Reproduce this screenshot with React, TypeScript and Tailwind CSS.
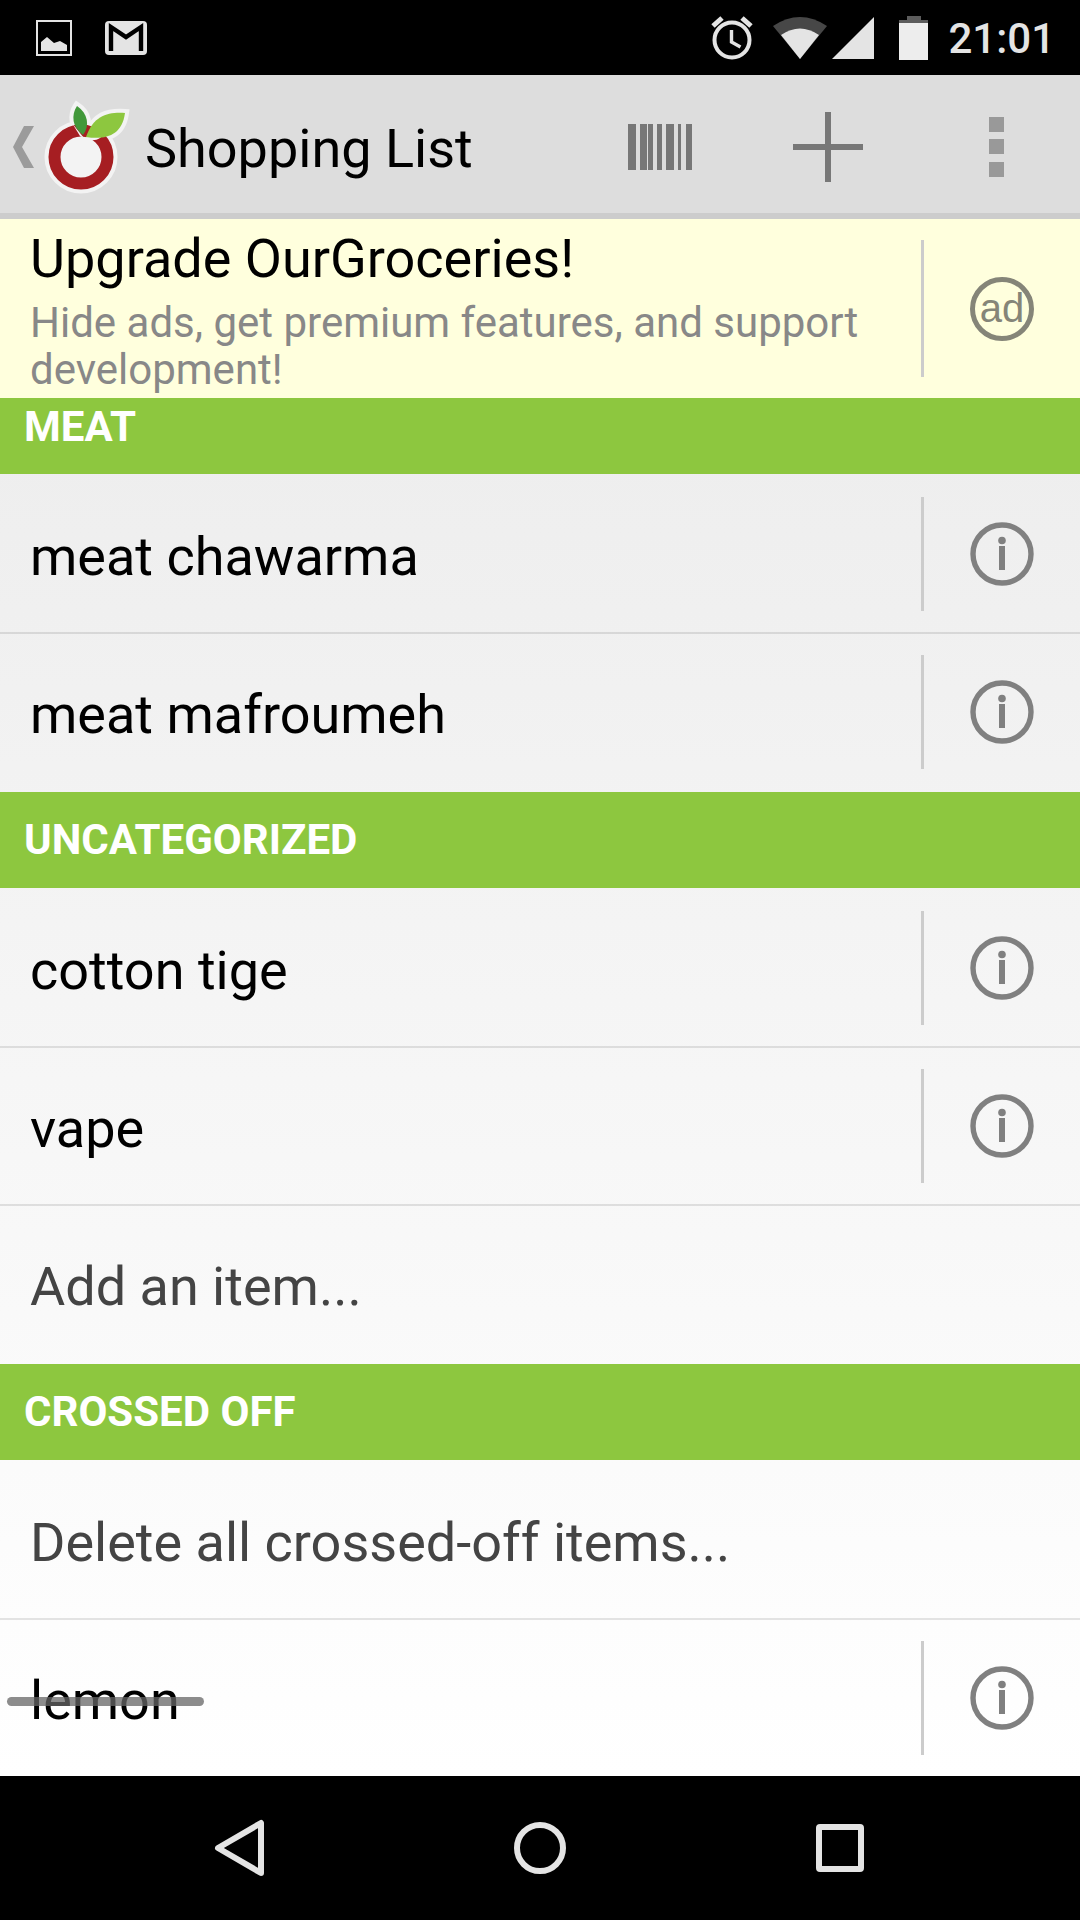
import React from "react";

type Row = { name: string; info?: boolean; muted?: boolean; crossed?: boolean };
type Section = { title: string; clipped?: boolean; rows: Row[] };

const sections: Section[] = [
  { title: "MEAT", clipped: true, rows: [{ name: "meat chawarma", info: true }, { name: "meat mafroumeh", info: true }] },
  {
    title: "UNCATEGORIZED",
    rows: [{ name: "cotton tige", info: true }, { name: "vape", info: true }, { name: "Add an item...", muted: true }],
  },
  {
    title: "CROSSED OFF",
    rows: [{ name: "Delete all crossed-off items...", muted: true }, { name: "lemon", info: true, crossed: true }],
  },
];

const StatusBar = () => {
  return (
    <div className="h-[75px] shrink-0 bg-black flex items-center justify-between pl-9 pr-[25px]">
      <div className="flex items-center gap-[33px]">
        <svg width="36" height="36" viewBox="0 0 36 36">
          <rect x="1" y="1" width="34" height="34" fill="none" stroke="#e4e4e4" strokeWidth="2" />
          <path d="M5 31V22L11 17L18 23L24 21L31 25V31Z" fill="#e4e4e4" />
        </svg>
        <svg width="42" height="34" viewBox="0 0 42 34">
          <rect width="42" height="34" rx="4" fill="#e4e4e4" />
          <path d="M6 30V6L21 16L36 6V30" fill="none" stroke="#000" strokeWidth="4.4" />
        </svg>
      </div>
      <div className="flex items-center">
        <svg width="42" height="44" viewBox="0 0 42 44" className="mr-5">
          <circle cx="21" cy="24" r="17.5" fill="none" stroke="#e4e4e4" strokeWidth="4" />
          <path d="M20.5 14V26L29.5 31" fill="none" stroke="#e4e4e4" strokeWidth="3.4" />
          <path d="M2 10L11 2M40 10L31 2" fill="none" stroke="#e4e4e4" strokeWidth="5" />
        </svg>
        <svg width="54" height="44" viewBox="0 0 54 44" className="mr-[5px]">
          <path d="M0 10Q27 -8 54 10L27 43Z" fill="#474747" />
          <path d="M8 19Q27 6 46 19L27 43Z" fill="#e4e4e4" />
        </svg>
        <svg width="42" height="44" viewBox="0 0 42 44" className="mr-[25px]">
          <path d="M0 43L42 1V43Z" fill="#e4e4e4" />
        </svg>
        <svg width="29" height="44" viewBox="0 0 29 44" className="mr-5">
          <path d="M0 7V4H8V0H22V4H29V7Z" fill="#5c5c5c" />
          <path d="M0 7H29V44H0Z" fill="#ededed" />
        </svg>
        <span className="pt-0.5 text-[42px] leading-[50px] font-medium text-[#e4e4e4]">21:01</span>
      </div>
    </div>
  );
};

const Logo = () => {
  return (
    <svg width="86" height="96" viewBox="0 0 86 96">
      <g stroke="#f3f3f3" strokeWidth="8" fill="#f3f3f3">
        <circle cx="37" cy="58" r="32.5" />
        <path d="M33 7C27 16 28 28 39 36C46 27 44 14 33 7Z" />
        <path d="M42 38C50 16 64 13 81 14C78 37 61 41 42 38Z" />
      </g>
      <circle cx="37" cy="58" r="26.5" fill="#f3f3f3" stroke="#a61e22" strokeWidth="12" />
      <path d="M28 24L40 39L66 30L56 39C50 43 43 41 36 37Z" fill="#f3f3f3" />
      <path d="M33 7C27 16 28 28 39 36C46 27 44 14 33 7Z" fill="#41983a" />
      <path d="M42 38C50 16 64 13 81 14C78 37 61 41 42 38Z" fill="#8dc73f" />
    </svg>
  );
};

const Header = () => {
  return (
    <header className="h-36 shrink-0 bg-[#ddd] border-b-6 border-[#ccc] flex items-center pt-1.5 pl-[13px] pr-[76px]">
      <button aria-label="Back to lists" className="flex items-center gap-2.5">
        <svg width="21" height="42" viewBox="0 0 21 42">
          <path d="M11 0H21L9 21L21 42H11L0 21Z" fill="#9b9b9b" />
        </svg>
        <Logo />
      </button>
      <h1 className="flex-1 pl-[15px] pt-1 text-[54px] leading-[64px] text-black">Shopping List</h1>
      <button aria-label="Scan barcode" className="mr-[101px]">
        <svg width="64" height="46" viewBox="0 0 64 46" fill="#777">
          <path d="M0 0H8V46H0ZM12 0H19V46H12ZM20 0H25V46H20ZM29 0H34V46H29ZM38 0H46V46H38ZM50 0H53V46H50ZM58 0H64V46H58Z" />
        </svg>
      </button>
      <button aria-label="Add item" className="mr-[126px]">
        <svg width="70" height="70" viewBox="0 0 70 70" fill="#777">
          <path d="M32 0H38V32H70V38H38V70H32V38H0V32H32Z" />
        </svg>
      </button>
      <button aria-label="More options">
        <svg width="15" height="60" viewBox="0 0 15 60" fill="#999">
          <path d="M0 0H15V15H0ZM0 22H15V37H0ZM0 45H15V60H0Z" />
        </svg>
      </button>
    </header>
  );
};

const InfoIcon = () => {
  return (
    <svg width="64" height="64" viewBox="0 0 64 64">
      <circle cx="32" cy="32" r="29" fill="none" stroke="#808080" strokeWidth="5.4" />
      <circle cx="32" cy="18.5" r="3.8" fill="#808080" />
      <rect x="29" y="24" width="6" height="24" fill="#808080" />
    </svg>
  );
};

const AdBanner = () => {
  return (
    <div className="h-[179px] bg-[#ffffdd] flex items-center">
      <div className="flex-1 pt-0.5 pl-[30px] pr-10">
        <h2 className="text-[54px] leading-[64px] text-black">Upgrade OurGroceries!</h2>
        <p className="pt-2 text-[42px] leading-[47px] text-[#888]">Hide ads, get premium features, and support development!</p>
      </div>
      <div className="w-[3px] h-[137px] bg-[#ccc]" />
      <button aria-label="Remove ads" className="w-[156px] flex justify-center">
        <span className="size-16 rounded-full border-[5px] border-[#858578] text-[#858578] font-['Liberation_Sans',sans-serif] text-[40px] leading-[52px] flex justify-center">
          ad
        </span>
      </button>
    </div>
  );
};

const ListRow = ({ row }: { row: Row }) => {
  return (
    <li className="h-[158px] first:h-[160px] first:pt-0.5 flex items-center border-b-2 border-black/10 last:border-transparent">
      <button className={`flex-1 pl-[30px] pt-1.5 text-left text-[54px] leading-[64px] ${row.muted ? "text-[#444]" : "text-black"}`}>
        <span className="relative">
          {row.name}
          {row.crossed && <span className="absolute top-7 -left-[23px] -right-6 h-[9px] rounded-full bg-[#666]/75" />}
        </span>
      </button>
      {row.info && (
        <>
          <div className="w-[3px] h-[114px] bg-[#ccc]" />
          <button aria-label={`Details for ${row.name}`} className="w-[156px] flex justify-center">
            <InfoIcon />
          </button>
        </>
      )}
    </li>
  );
};

const NavBar = () => {
  return (
    <nav className="h-36 shrink-0 bg-black flex items-center justify-center gap-[248px]">
      <button aria-label="Back">
        <svg width="52" height="58" viewBox="0 0 52 58">
          <path d="M47 4V54L4 29Z" fill="none" stroke="#e4e4e4" strokeWidth="6" strokeLinejoin="round" />
        </svg>
      </button>
      <button aria-label="Home">
        <svg width="52" height="52" viewBox="0 0 52 52">
          <circle cx="26" cy="26" r="23" fill="none" stroke="#e4e4e4" strokeWidth="6" />
        </svg>
      </button>
      <button aria-label="Recent apps">
        <svg width="52" height="48" viewBox="0 0 52 48">
          <rect x="5" y="3" width="42" height="42" rx="1" fill="none" stroke="#e4e4e4" strokeWidth="6" strokeLinejoin="round" />
        </svg>
      </button>
    </nav>
  );
};

const App = () => {
  return (
    <div className="h-screen flex flex-col font-[Roboto,sans-serif]">
      <StatusBar />
      <Header />
      <main className="flex-1 min-h-0 overflow-hidden bg-linear-to-b from-[#ebebeb] to-white">
        <AdBanner />
        {sections.map((section) => (
          <section key={section.title}>
            <h3
              className={`bg-[#8dc73f] pl-6 text-[42px] font-bold text-white ${
                section.clipped ? "h-[76px] leading-[58px]" : "h-24 leading-[96px]"
              }`}
            >
              {section.title}
            </h3>
            <ul>
              {section.rows.map((row) => (
                <ListRow key={row.name} row={row} />
              ))}
            </ul>
          </section>
        ))}
      </main>
      <NavBar />
    </div>
  );
};

export default App;
